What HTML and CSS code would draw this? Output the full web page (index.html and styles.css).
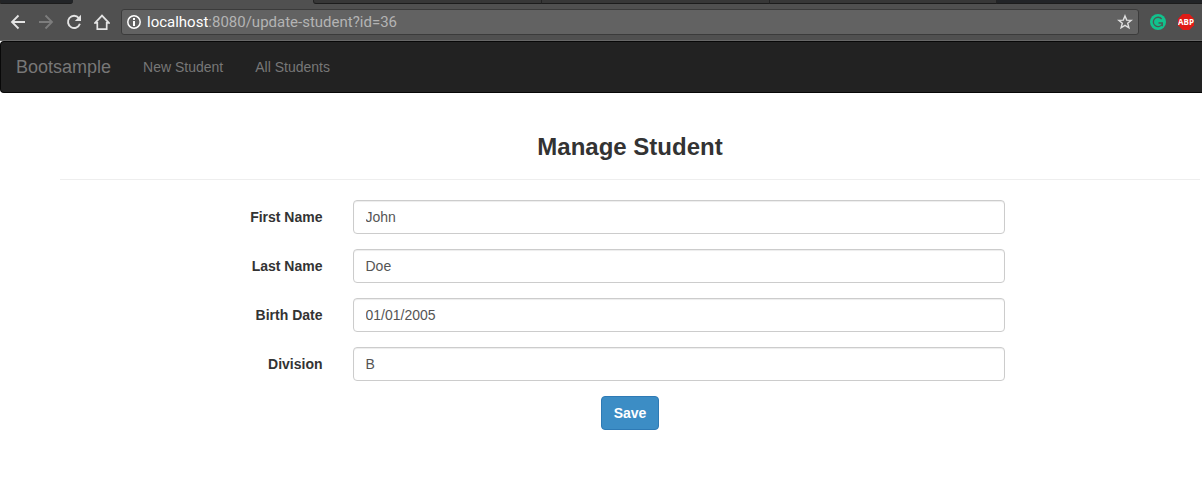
FILE: index.html
```html
<!DOCTYPE html>
<html lang="en">
<head>
<meta charset="utf-8">
<title>Bootsample</title>
<link rel="stylesheet" href="styles.css">
</head>
<body>
<div class="browser">
  <div class="tabs">
    <span class="tab-gap"></span>
    <span class="tab tab-active"></span>
    <span class="tab"></span>
    <span class="tab"></span>
    <span class="tab"></span>
    <span class="tab-gap tab-rest"></span>
  </div>
  <div class="toolbar">
    <div class="controls">
      <button class="icon-button" type="button" aria-label="Back"><svg width="16" height="16" viewBox="0 0 16 16" fill="none" stroke="#e4e4e4" stroke-width="1.800"><path d="M15 8H2.500M8.500 1.500 2 8l6.500 6.500"/></svg></button>
      <button class="icon-button" type="button" aria-label="Forward"><svg width="16" height="16" viewBox="0 0 16 16" fill="none" stroke="#7d7d7d" stroke-width="1.800"><path d="M1 8h12.500M7.500 1.500 14 8l-6.500 6.500"/></svg></button>
      <button class="icon-button" type="button" aria-label="Reload"><svg width="16" height="16" viewBox="0 0 16 16" fill="none" stroke="#e4e4e4" stroke-width="1.900"><path d="M12.800 4A6.100 6.100 0 1 0 13.900 9.800"/><path d="M15 .8v6.200H8.800z" fill="#e4e4e4" stroke="none"/></svg></button>
      <button class="icon-button" type="button" aria-label="Home"><svg width="16" height="16" viewBox="0 0 16 16" fill="none" stroke="#e4e4e4" stroke-width="1.700"><path d="M3.300 8.800H1.200L8 1.600l6.800 7.200h-2.100v6.300H3.300z"/></svg></button>
    </div>
    <div class="address">
      <svg width="14" height="14" viewBox="0 0 14 14" fill="none" stroke="#fff"><circle cx="7" cy="7" r="6.200" stroke-width="1.500"/><path d="M7 3v2M7 6v5" stroke-width="2"/></svg>
      <span class="url"><span class="host">localhost</span>:8080/update-student?id=36</span>
      <svg width="16" height="16" viewBox="0 0 16 16" fill="none" stroke="#e0e0e0" stroke-width="1.400"><path d="m8 1.900 1.700 4.200 4.500.3-3.500 2.900 1.200 4.500L8 11.300l-3.900 2.500 1.200-4.500-3.500-2.900 4.500-.3z"/></svg>
    </div>
    <div class="extensions">
      <svg width="16" height="16" viewBox="0 0 16 16"><circle cx="8" cy="8" r="8" fill="#11c28d"/><path d="M11.700 5A4.700 4.700 0 1 0 12 10.500M8.500 9h3.800v3.200" fill="none" stroke="#4b5a54" stroke-width="1.300"/></svg>
      <svg width="16" height="16" viewBox="0 0 16 16"><path d="M4.700 0h6.600L16 4.700v6.600L11.300 16H4.700L0 11.300V4.700z" fill="#e01b16"/><text x="8" y="11" class="abp" text-anchor="middle">ABP</text></svg>
    </div>
  </div>
</div>
<nav class="navbar">
  <a class="brand" href="#">Bootsample</a>
  <a class="nav-link" href="#">New Student</a>
  <a class="nav-link" href="#">All Students</a>
</nav>
<main class="container">
  <h3 class="title">Manage Student</h3>
  <hr class="rule">
  <form class="form">
    <div class="form-group"><label class="label" for="first">First Name</label><div class="field"><input class="input" id="first" type="text" value="John"></div></div>
    <div class="form-group"><label class="label" for="last">Last Name</label><div class="field"><input class="input" id="last" type="text" value="Doe"></div></div>
    <div class="form-group"><label class="label" for="birth">Birth Date</label><div class="field"><input class="input" id="birth" type="text" value="01/01/2005"></div></div>
    <div class="form-group"><label class="label" for="division">Division</label><div class="field"><input class="input" id="division" type="text" value="B"></div></div>
    <div class="actions"><button class="save" type="submit">Save</button></div>
  </form>
</main>
</body>
</html>
```
FILE: styles.css
```css
* { box-sizing: border-box; }
body {
  margin: 0;
  overflow-x: hidden;
  background: #fff;
  color: #333;
  font: 14px/20px "Liberation Sans", Arial, sans-serif;
}
a { text-decoration: none; }

.browser { background: #505050; }
.tabs {
  display: grid;
  grid-template-columns: 73px 240px 228px 228px 227px 1fr;
  height: 4px;
}
.tab, .tab-gap {
  background: #373737;
  border-bottom: 1px solid #1c1c1c;
  border-left: 1px solid #242424;
}
.tab-gap { background: #222427; border-bottom-right-radius: 3px; }
.tab-rest { border-radius: 0; }
.tab-active { background: #505050; border: 0; }
.tab-active + .tab { border-bottom-left-radius: 3px; }
.toolbar {
  display: flex;
  align-items: center;
  height: 37px;
  padding: 0 8px 1px 10px;
  border-bottom: 1px solid #686868;
}
.controls { display: flex; gap: 12px; width: 111px; }
.icon-button {
  display: flex;
  flex: none;
  padding: 0;
  border: 0;
  background: none;
}
.address {
  display: flex;
  flex: 1;
  align-items: center;
  height: 26px;
  padding: 0 5px;
  border: 1px solid #3b3b3b;
  border-radius: 3px;
  background: #626262;
}
.url {
  flex: 1;
  padding-left: 6px;
  color: #b4b4b4;
  font: 15px/20px Roboto, sans-serif;
}
.host { color: #fff; }
.extensions { display: flex; gap: 12px; padding-left: 11px; }
.abp { fill: #fff; font: bold 8px "Open Sans", sans-serif; }

.navbar {
  display: flex;
  align-items: center;
  gap: 2px;
  min-height: 52px;
  border: 1px solid #080808;
  border-right: 0;
  border-radius: 4px 0 0 4px;
  background: #222;
}
.brand { padding: 15px; color: #777; font-size: 18px; }
.nav-link { padding: 15px; color: #777; }

.container { padding: 41px 2px 0 60px; }
.title {
  margin: 0;
  font-size: 24px;
  line-height: 26px;
  text-align: center;
}
.rule { margin: 19px 0 20px; border: 0; border-top: 1px solid #eee; }
.form { margin: 0 -15px; }
.form-group {
  display: grid;
  grid-template-columns: 3fr 7fr 2fr;
  margin-bottom: 15px;
}
.label { padding: 7px 15px 0; font-weight: bold; text-align: right; }
.field { padding: 0 15px; }
.input {
  display: block;
  width: 100%;
  height: 34px;
  padding: 6px 12px;
  border: 1px solid #ccc;
  border-radius: 4px;
  box-shadow: inset 0 1px 1px rgba(0, 0, 0, .075);
  color: #555;
  font: inherit;
}
.actions { text-align: center; }
.save {
  height: 34px;
  padding: 6px 12px;
  border: 1px solid #2e7ab5;
  border-radius: 4px;
  background: #3c8dc5;
  color: #fff;
  font: bold 14px/20px "Liberation Sans", Arial, sans-serif;
}
```
